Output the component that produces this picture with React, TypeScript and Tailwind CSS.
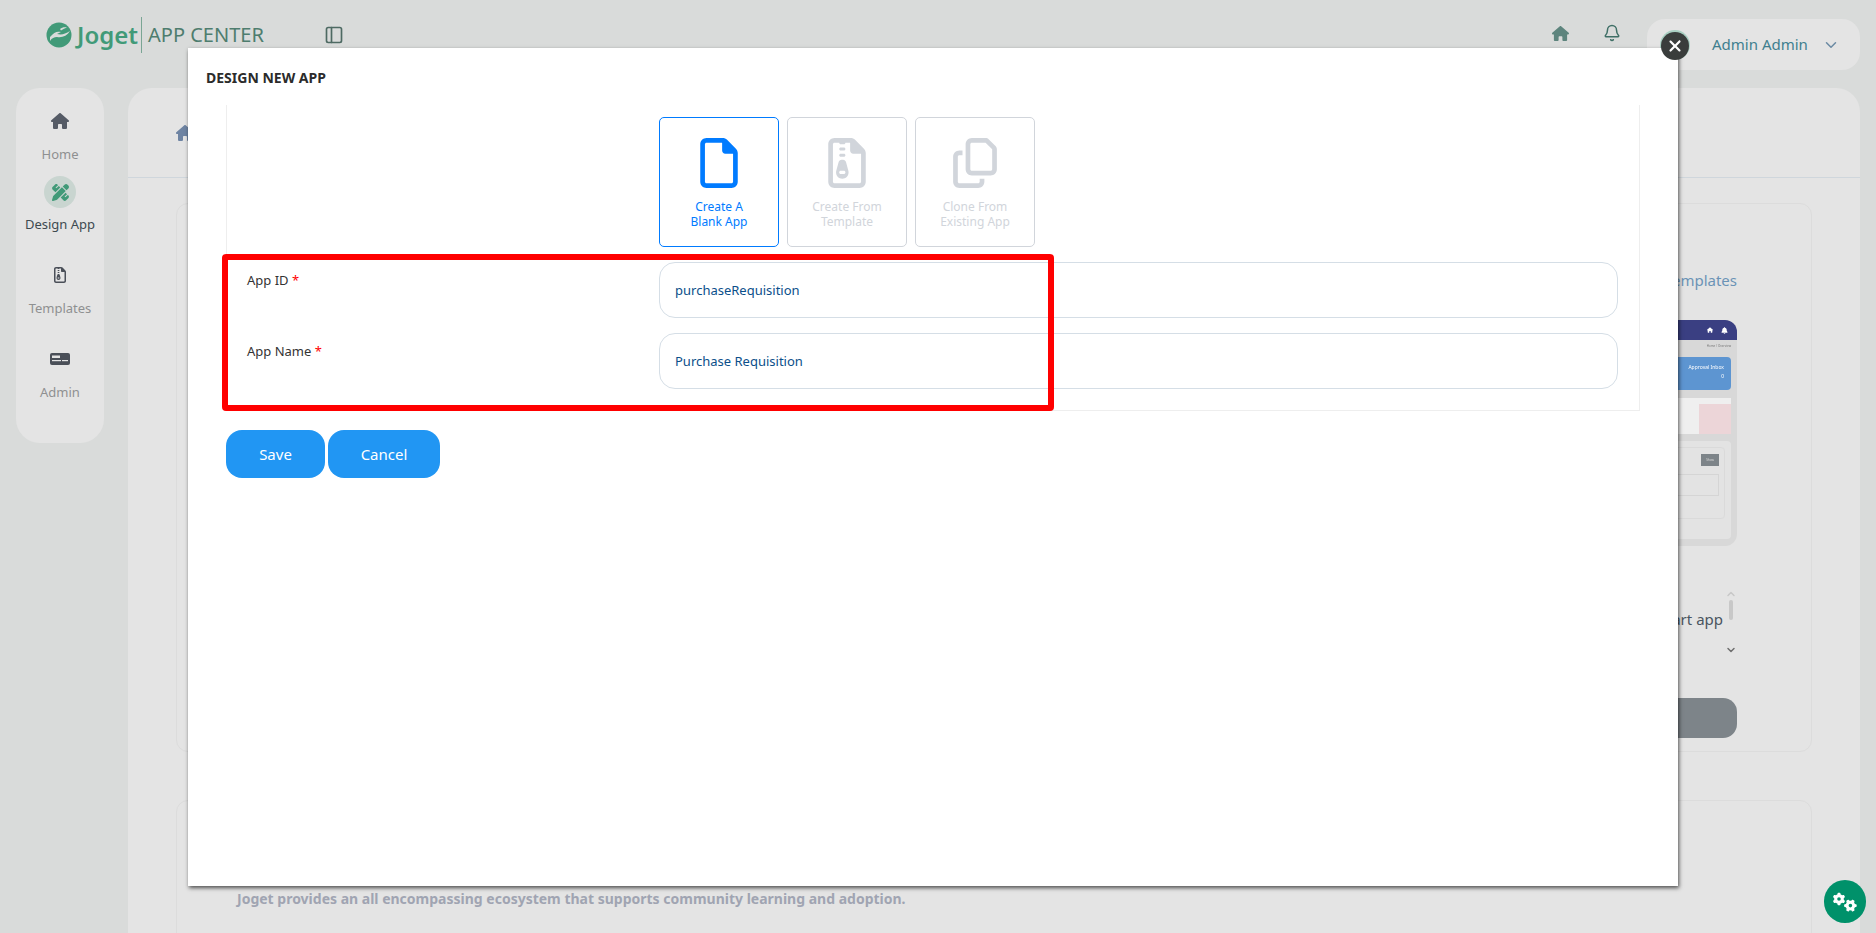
import { Bell, ChevronDown, ChevronUp, PanelLeft } from 'lucide-react';
import { FaGears, FaHouse, FaPenRuler, FaRegCopy, FaRegFile, FaRegFileZipper, FaXmark } from 'react-icons/fa6';
import { FaBell } from 'react-icons/fa';

const font = { fontFamily: '"Noto Sans", sans-serif' };

const JogetLogo = () => (
    <svg width="26" height="26" viewBox="0 0 26 26">
        <circle cx="13" cy="13" r="12.5" fill="#419a78" />
        <path d="M4 15c4-5 7-6 11-5l-4 2c5 1 8 0 13-3-3 5-8 7-13 6-3 0-5 1-7 4z" fill="#d9dbda" />
        <path d="M14 7c2-1.5 4-2 7-1.5-2 .5-4 1.5-6 3z" fill="#d9dbda" />
        <path d="M11 20c3-2 7-3 13-3-2 4-5 7-8 8-2-1-4-3-5-5z" fill="#d9dbda" opacity="0" />
    </svg>
);

const AdminIcon = () => (
    <svg width="20" height="14" viewBox="0 0 20 14">
        <rect width="20" height="12" y="1" rx="2" fill="#4a4f58" />
        <rect x="2" y="3.5" width="8" height="2.5" fill="#e4e4e4" />
        <rect x="2" y="8" width="9" height="1.2" fill="#e4e4e4" />
        <rect x="12" y="8" width="6" height="1.2" fill="#e4e4e4" />
    </svg>
);

const NavItem = ({ icon, label, active, className }: { icon: React.ReactNode; label: string; active?: boolean; className: string }) => (
    <div className={`flex flex-col items-center ${className}`}>
        <div className={`flex h-8 w-8 items-center justify-center rounded-full ${active ? 'bg-[#c9d5d0]' : ''}`}>{icon}</div>
        <span className={`text-[13px] leading-[18px] ${active ? 'mt-[7px] text-[#3d4a50]' : 'mt-[8px] text-[#8f9091]'}`}>{label}</span>
    </div>
);

const Preview = () => (
    <div className="h-[226px] w-[300px] overflow-hidden rounded-xl bg-[#d8d8d8] blur-[0.4px]">
        <div className="flex h-[20px] items-center justify-end gap-[8px] bg-[#3a3f82] pr-[9px] text-white">
            <FaHouse size={6} />
            <FaBell size={7} />
        </div>
        <div className="pr-[6px]">
            <div className="h-[17px] pt-[4px] text-right text-[3px] text-[#777]">Home / Overview</div>
            <div className="h-[33px] rounded-sm bg-[#5d95d1] px-[7px] pt-[6px] text-right text-[5px] leading-[9px] text-white">
                <div>Approval Inbox</div>
                <div>0</div>
            </div>
            <div className="mt-[8px] flex h-[36px] justify-end bg-[#efefef] pt-[6px]">
                <div className="h-[30px] w-[32px] bg-[#ecd5d8]" />
            </div>
            <div className="mt-[7px] h-[98px] rounded-sm bg-[#e3e3e3] p-[6px]">
                <div className="flex h-[72px] flex-col items-end rounded-sm border border-[#dadada] pr-[5px] pt-[6px]">
                    <div className="flex h-[12px] w-[18px] items-center justify-center bg-[#7d8489] text-[3px] text-[#ddd]">Show</div>
                    <div className="mt-[8px] h-[22px] w-[200px] border border-[#d5d5d5]" />
                </div>
            </div>
        </div>
    </div>
);

const FormRow = ({ label, value }: { label: string; value: string }) => (
    <div className="flex">
        <label className="w-[412px] pt-[8px] text-[13px] leading-[20px] text-[#333]">
            {label} <span className="text-[#f00]">*</span>
        </label>
        <input
            readOnly
            value={value}
            className="h-[56px] w-[959px] rounded-2xl border border-[#d5dee6] bg-white px-[15px] text-[13px] text-[#0b4f8a] outline-none"
        />
    </div>
);

const AppTile = ({ icon, lines, active }: { icon: React.ReactNode; lines: [string, string]; active?: boolean }) => (
    <div
        className={`flex h-[130px] w-[120px] flex-col items-center rounded-[5px] border pt-[20px] text-center text-[12px] leading-[15px] ${
            active ? 'border-[#007bff] text-[#007bff]' : 'border-[#d1d5db] text-[#d1d5db]'
        }`}
    >
        {icon}
        <span className="mt-[11px]">{lines[0]}</span>
        <span>{lines[1]}</span>
    </div>
);

export default function App() {
    return (
        <div style={font} className="relative h-[933px] overflow-hidden bg-[#d9dbda] px-4">
            {/* Top bar, mostly behind the dialog */}
            <header className="flex h-[88px] items-start">
                <div className="flex h-[70px] flex-1 items-center">
                    <div className="ml-[30px] flex items-center gap-[5px]">
                        <JogetLogo />
                        <span className="text-[24px] font-semibold leading-none text-[#419a78]">Joget</span>
                    </div>
                    <div className="ml-[3px] h-[36px] w-px bg-[#7aa594]" />
                    <span className="ml-[6px] text-[20px] text-[#4e7d6e]">APP CENTER</span>
                    <PanelLeft size={20} className="ml-[60px] text-[#4e6a63]" />
                </div>
                <div className="mr-[26px] flex h-[70px] items-center gap-[34px] text-[#3f6f66]">
                    <FaHouse size={17} className="mt-[-4px] opacity-80" />
                    <Bell size={18} className="mt-[-4px]" />
                </div>
                <div className="mt-[19px] flex h-[51px] w-[213px] items-center rounded-[18px] bg-[#e4e4e4] pl-[13px]">
                    <div className="h-[30px] w-[30px] rounded-full bg-[#a9cfc2]" />
                    <span className="ml-[22px] text-[15px] text-[#3f7f8f]">Admin Admin</span>
                    <ChevronDown size={18} className="ml-[14px] text-[#6b8aa3]" />
                </div>
            </header>

            <div className="flex gap-6">
                {/* Side navigation */}
                <nav className="h-[355px] w-[88px] shrink-0 rounded-3xl bg-[#e4e4e4] pt-[17px]">
                    <NavItem icon={<FaHouse size={18} className="text-[#555b66]" />} label="Home" className="h-[71px]" />
                    <NavItem icon={<FaPenRuler size={17} className="text-[#419a78]" />} label="Design App" active className="h-[83px]" />
                    <NavItem icon={<FaRegFileZipper size={16} className="text-[#4a4f58]" />} label="Templates" className="h-[84px]" />
                    <NavItem icon={<AdminIcon />} label="Admin" className="h-[84px]" />
                </nav>

                {/* Main page */}
                <main className="h-[900px] flex-1 rounded-t-3xl bg-[#e4e4e4]">
                    <div className="flex h-[90px] items-center border-b border-[#cfd6dc] pl-[48px]">
                        <FaHouse size={18} className="text-[#6e84a3]" />
                    </div>
                    <div className="flex flex-col gap-[48px] px-[48px] pt-[25px]">
                        <section className="flex h-[549px] flex-col items-end rounded-xl border border-[#dcdcdc] pr-[74px] pt-[64px]">
                            <span className="text-[15px] leading-[24px] text-[#6b93b6]">Browse templates</span>
                            <div className="mt-[28px]">
                                <Preview />
                            </div>
                            <div className="relative mt-[48px] h-[110px] w-[300px]">
                                <p className="pr-[14px] pt-[14px] text-right text-[15px] leading-[22px] text-[#4a5560]">Kick-start app</p>
                                <div className="absolute right-0 top-0 flex flex-col items-center text-[#c8c8c8]">
                                    <ChevronUp size={12} strokeWidth={3} className="mt-[-6px]" />
                                    <div className="mt-[0px] h-[20px] w-[4px] rounded bg-[#c8c8c8]" />
                                    <ChevronDown size={12} strokeWidth={3} className="mt-[24px] text-[#6f6f6f]" />
                                </div>
                            </div>
                            <div className="mt-[-6px] h-[40px] w-[300px] rounded-[14px] bg-[#7d8489]" />
                        </section>
                        <section className="h-[200px] rounded-xl border border-[#dcdcdc] pl-[60px] pt-[52px]">
                            <h3 className="text-[16px] font-semibold leading-[22px] text-[#2a2a55]">Community</h3>
                            <p className="mt-[14px] text-[14px] font-bold leading-[20px] text-[#a0a4b2]">
                                Joget provides an all encompassing ecosystem that supports community learning and adoption.
                            </p>
                        </section>
                    </div>
                </main>
            </div>

            {/* Floating settings button */}
            <button className="absolute left-[1824px] top-[880px] flex h-[43px] w-[42px] items-center justify-center rounded-full bg-[#00916a] text-white">
                <FaGears size={24} />
            </button>

            {/* Design new app dialog */}
            <div className="absolute left-[188px] top-[48px] h-[838px] w-[1490px] bg-white shadow-[1px_2px_4px_rgba(0,0,0,0.65)]">
                <h2 className="pl-[18px] pt-[22px] text-[14px] font-bold leading-[16px] text-[#2b2b2b]">DESIGN NEW APP</h2>
                <div className="ml-[38px] mt-[19px] h-[306px] w-[1414px] border-x border-b border-[#eeeeee] pl-[20px] pt-[12px]">
                    <div className="ml-[412px] flex gap-[8px]">
                        <AppTile active icon={<FaRegFile size={50} />} lines={['Create A', 'Blank App']} />
                        <AppTile icon={<FaRegFileZipper size={50} />} lines={['Create From', 'Template']} />
                        <AppTile icon={<FaRegCopy size={50} />} lines={['Clone From', 'Existing App']} />
                    </div>
                    <div className="mt-[15px] flex flex-col gap-[15px]">
                        <FormRow label="App ID" value="purchaseRequisition" />
                        <FormRow label="App Name" value="Purchase Requisition" />
                    </div>
                </div>
                <div className="ml-[38px] mt-[19px] flex gap-[3px]">
                    <button className="h-[48px] w-[99px] rounded-2xl bg-[#2196f3] text-[15px] text-white">Save</button>
                    <button className="h-[48px] w-[112px] rounded-2xl bg-[#2196f3] text-[15px] text-white">Cancel</button>
                </div>
                {/* Annotation drawn over the form */}
                <div className="absolute left-[34px] top-[206px] h-[157px] w-[832px] rounded-sm border-[6px] border-[#f00]" />
            </div>

            {/* Dialog close button */}
            <button className="absolute left-[1661px] top-[32px] flex h-[28px] w-[28px] items-center justify-center rounded-full bg-[#3a3d3c] text-white">
                <FaXmark size={18} />
            </button>
        </div>
    );
}
